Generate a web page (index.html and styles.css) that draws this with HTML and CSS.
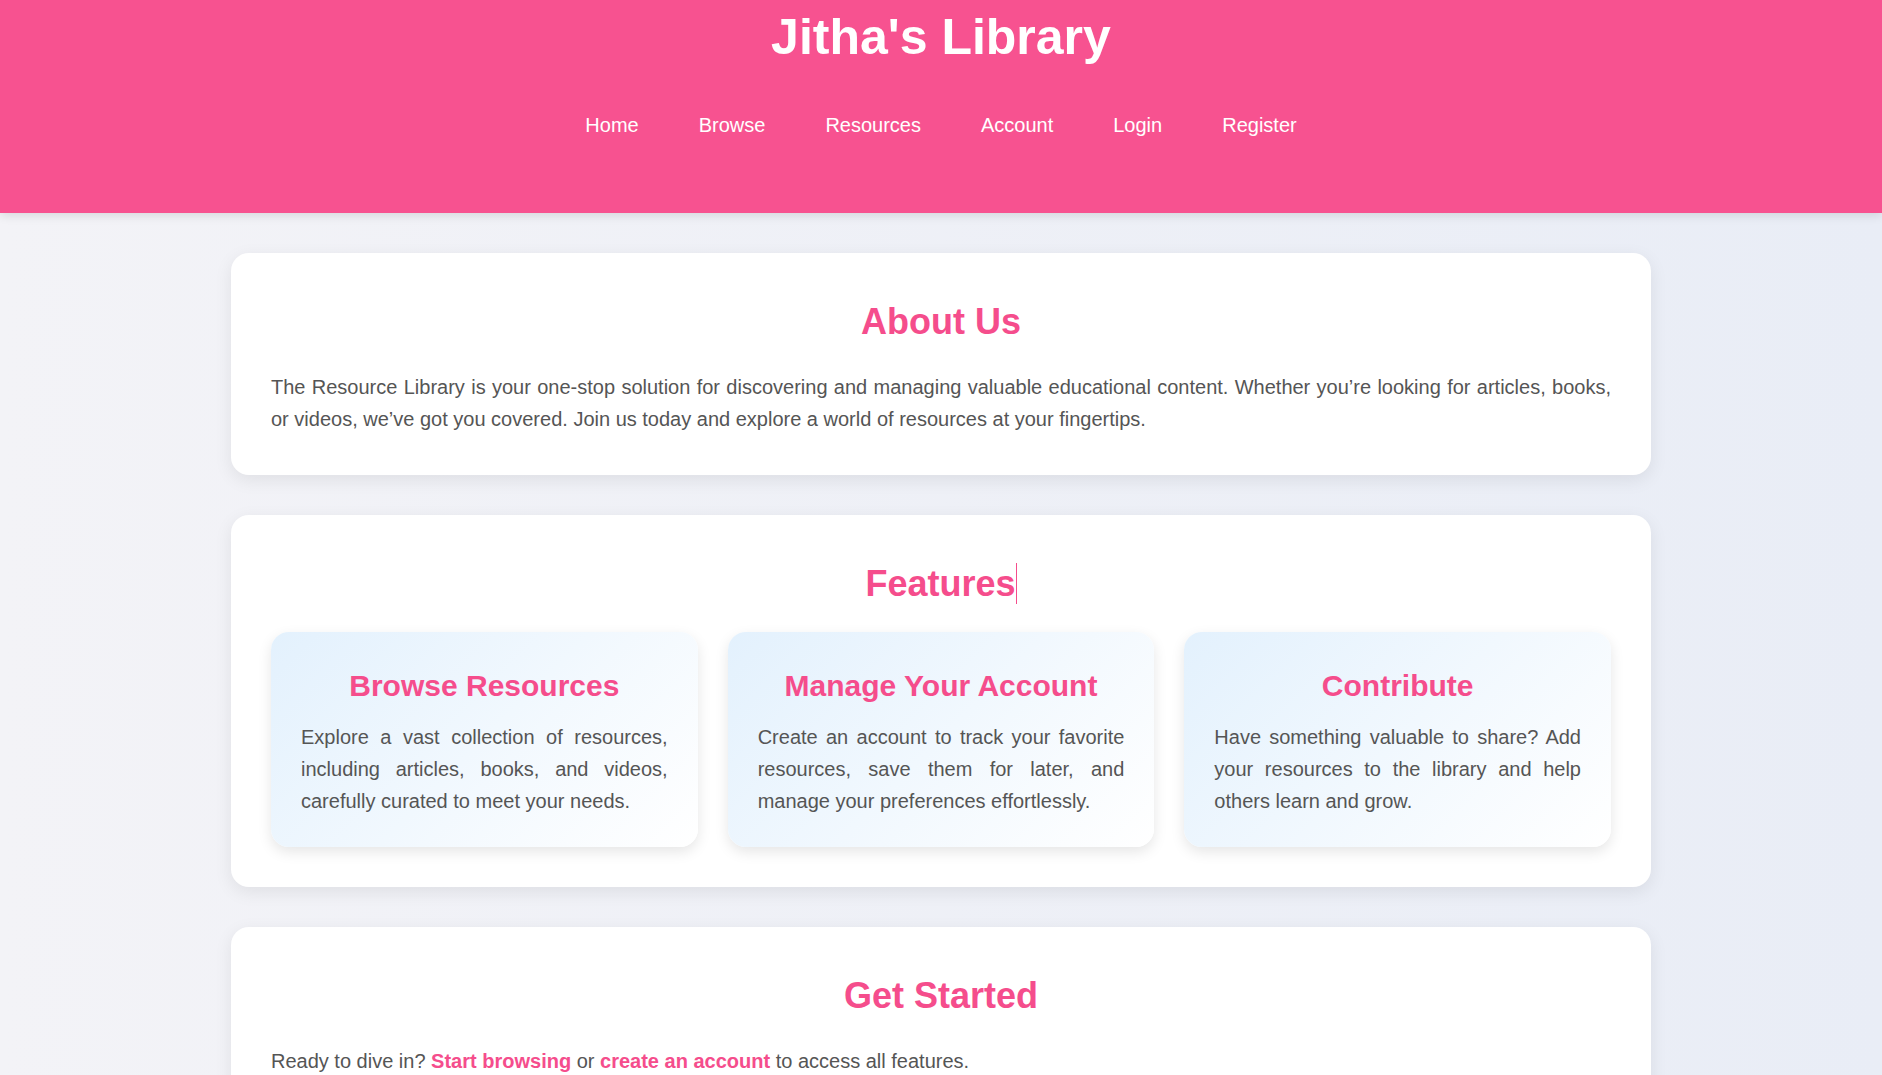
FILE: index.html
```html
<!DOCTYPE html>
<html lang="en">
<head>
<meta charset="utf-8">
<title>Jitha's Library</title>
<link rel="stylesheet" href="styles.css">
</head>
<body>
<header class="site-header">
  <h1 class="site-title">Jitha's Library</h1>
  <nav class="main-nav">
    <a href="#">Home</a>
    <a href="#">Browse</a>
    <a href="#">Resources</a>
    <a href="#">Account</a>
    <a href="#">Login</a>
    <a href="#">Register</a>
  </nav>
</header>
<main class="content">
  <section class="card">
    <h2 class="card-title">About Us</h2>
    <p class="card-text">The Resource Library is your one-stop solution for discovering and managing valuable educational content. Whether you’re looking for articles, books, or videos, we’ve got you covered. Join us today and explore a world of resources at your fingertips.</p>
  </section>
  <section class="card">
    <h2 class="card-title"><span class="typing">Features</span></h2>
    <div class="features">
      <div class="feature">
        <h3 class="feature-title">Browse Resources</h3>
        <p class="feature-text">Explore a vast collection of resources, including articles, books, and videos, carefully curated to meet your needs.</p>
      </div>
      <div class="feature">
        <h3 class="feature-title">Manage Your Account</h3>
        <p class="feature-text">Create an account to track your favorite resources, save them for later, and manage your preferences effortlessly.</p>
      </div>
      <div class="feature">
        <h3 class="feature-title">Contribute</h3>
        <p class="feature-text">Have something valuable to share? Add your resources to the library and help others learn and grow.</p>
      </div>
    </div>
  </section>
  <section class="card">
    <h2 class="card-title">Get Started</h2>
    <p class="card-text">Ready to dive in? <a class="inline-link" href="#">Start browsing</a> or <a class="inline-link" href="#">create an account</a> to access all features.</p>
  </section>
</main>
</body>
</html>
```

FILE: styles.css
```css
* {
  box-sizing: border-box;
}

html, body {
  margin: 0;
  padding: 0;
}

body {
  font-family: "Liberation Sans", Arial, sans-serif;
  font-size: 20px;
  line-height: 1.6;
  color: #555555;
  background: linear-gradient(to right, #f3f3f7, #e9edf6);
  min-height: 100vh;
}

.site-header {
  background: #f75290;
  color: #ffffff;
  text-align: center;
  padding: 7px 0 72px;
  box-shadow: 0 2px 10px rgba(0, 0, 0, 0.12);
  position: relative;
  z-index: 1;
}

.site-title {
  margin: 0;
  font-size: 50px;
  line-height: 60px;
  font-weight: bold;
}

.main-nav {
  display: flex;
  justify-content: center;
  gap: 60px;
  margin-top: 42px;
}

.main-nav a {
  color: #ffffff;
  text-decoration: none;
  font-size: 20px;
  line-height: 32px;
}

.content {
  max-width: 1420px;
  margin: 40px auto 0;
  display: flex;
  flex-direction: column;
  gap: 40px;
  padding-bottom: 40px;
}

.card {
  background: #ffffff;
  border-radius: 18px;
  padding: 40px;
  box-shadow: 0 5px 18px rgba(0, 0, 0, 0.08);
}

.card-title {
  margin: 0 0 20px;
  text-align: center;
  color: #f54d8c;
  font-size: 36px;
  font-weight: bold;
}

.typing {
  border-right: 1.5px solid #f54d8c;
}

.card-text {
  margin: 0;
  text-align: justify;
}

.inline-link {
  color: #f54d8c;
  font-weight: bold;
  text-decoration: none;
}

.features {
  display: grid;
  grid-template-columns: repeat(3, 1fr);
  gap: 30px;
}

.feature {
  background: linear-gradient(135deg, #e3f1fd, #ffffff);
  border-radius: 18px;
  padding: 30px;
  box-shadow: 0 5px 14px rgba(0, 0, 0, 0.1);
}

.feature-title {
  margin: 0 0 11px;
  text-align: center;
  color: #f54d8c;
  font-size: 30px;
  font-weight: bold;
}

.feature-text {
  margin: 0;
  text-align: justify;
}
```
